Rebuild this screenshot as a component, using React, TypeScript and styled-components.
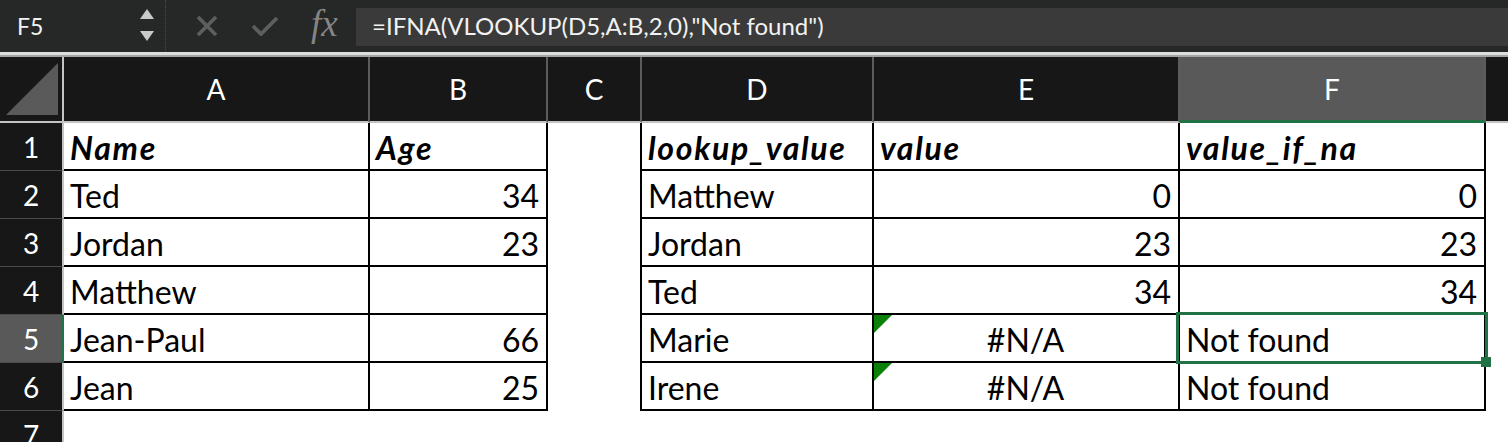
import React from "react";
import styled, { createGlobalStyle } from "styled-components";

const GlobalStyle = createGlobalStyle`
  body {
    margin: 0;
    background: #ffffff;
    font-family: Lato, "Noto Sans", sans-serif;
    overflow: hidden;
  }
`;

type Align = "left" | "right" | "center";

interface CellData {
  text?: string;
  align?: Align;
  bold?: boolean;
  error?: boolean;
}

const COLUMNS = ["A", "B", "C", "D", "E", "F", ""];
const SELECTED_COL = "F";
const SELECTED_ROW = 5;

// which columns carry the black table borders (right edge / bottom edge)
const rightBorder = [true, true, true, true, true, true, false];
const bottomBorder = [true, true, false, true, true, true, false];

const b = (text: string): CellData => ({ text, bold: true });
const l = (text: string): CellData => ({ text });
const r = (text: string): CellData => ({ text, align: "right" });

const rows: CellData[][] = [
  [b("Name"), b("Age"), {}, b("lookup_value"), b("value"), b("value_if_na"), {}],
  [l("Ted"), r("34"), {}, l("Matthew"), r("0"), r("0"), {}],
  [l("Jordan"), r("23"), {}, l("Jordan"), r("23"), r("23"), {}],
  [l("Matthew"), {}, {}, l("Ted"), r("34"), r("34"), {}],
  [
    l("Jean-Paul"),
    r("66"),
    {},
    l("Marie"),
    { text: "#N/A", align: "center", error: true },
    l("Not found"),
    {},
  ],
  [
    l("Jean"),
    r("25"),
    {},
    l("Irene"),
    { text: "#N/A", align: "center", error: true },
    l("Not found"),
    {},
  ],
];

const App: React.FC = () => {
  return (
    <>
      <GlobalStyle />
      <Window>
        <FormulaBar>
          <NameBox>
            <NameText>F5</NameText>
            <Stepper>
              <svg width="16" height="34" viewBox="0 0 16 34">
                <polygon points="8,1 15,11 1,11" fill="#c9c9c9" />
                <polygon points="1,23 15,23 8,33" fill="#c9c9c9" />
              </svg>
            </Stepper>
          </NameBox>
          <BarIcons>
            <svg width="22" height="20" viewBox="0 0 22 20">
              <path
                d="M2 1 L20 19 M20 1 L2 19"
                stroke="#5e5e5e"
                strokeWidth="3.6"
                fill="none"
              />
            </svg>
            <svg width="28" height="20" viewBox="0 0 28 20">
              <path
                d="M2 10 L10 18 L26 2"
                stroke="#5e5e5e"
                strokeWidth="3.8"
                fill="none"
              />
            </svg>
            <FxLabel>fx</FxLabel>
          </BarIcons>
          <FormulaInput>=IFNA(VLOOKUP(D5,A:B,2,0),"Not found")</FormulaInput>
        </FormulaBar>
        <Divider />
        <Sheet>
          <Corner>
            <svg width="54" height="54" viewBox="0 0 54 54">
              <polygon points="52,0 52,52 0,52" fill="#5a5a5a" />
            </svg>
          </Corner>
          {COLUMNS.map((c, i) => (
            <ColHeader key={"h" + i} $selected={c === SELECTED_COL} $last={c === ""}>
              {c}
            </ColHeader>
          ))}
          {rows.map((row, ri) => (
            <React.Fragment key={"r" + ri}>
              <RowHeader $selected={ri + 1 === SELECTED_ROW}>{ri + 1}</RowHeader>
              {row.map((cell, ci) => (
                <Cell
                  key={ci}
                  $align={cell.align || "left"}
                  $bold={!!cell.bold}
                  $right={rightBorder[ci]}
                  $bottom={bottomBorder[ci]}
                >
                  {cell.error && <ErrorFlag />}
                  {cell.text}
                  {ri + 1 === SELECTED_ROW && COLUMNS[ci] === SELECTED_COL && (
                    <Selection>
                      <FillHandle />
                    </Selection>
                  )}
                </Cell>
              ))}
            </React.Fragment>
          ))}
          <RowHeader $selected={false}>7</RowHeader>
          {COLUMNS.map((_, i) => (
            <Cell key={"e" + i} $align="left" $bold={false} $right={false} $bottom={false} />
          ))}
        </Sheet>
      </Window>
    </>
  );
};

const Window = styled.div`
  width: 1508px;
  height: 442px;
  overflow: hidden;
  background: #ffffff;
`;

const FormulaBar = styled.div`
  display: flex;
  align-items: stretch;
  height: 52px;
  background: #262727;
`;

const NameBox = styled.div`
  display: flex;
  align-items: center;
  justify-content: space-between;
  width: 166px;
  padding: 0 10px 0 17px;
  box-sizing: border-box;
  border-right: 1px dotted #4a4a4a;
`;

const NameText = styled.span`
  color: #f2f2f2;
  font-size: 23px;
  margin-top: -1px;
`;

const Stepper = styled.div`
  display: flex;
  align-items: center;
  margin-top: -2px;
`;

const BarIcons = styled.div`
  display: flex;
  align-items: center;
  gap: 33px;
  width: 190px;
  box-sizing: border-box;
  padding: 0 0 0 30px;
  margin-top: -1px;
`;

const FxLabel = styled.span`
  font-family: "Liberation Serif", "DejaVu Serif", serif;
  font-style: italic;
  font-size: 37px;
  color: #858585;
  margin-left: -1px;
  margin-top: -4px;
`;

const FormulaInput = styled.div`
  flex: 1;
  display: flex;
  align-items: center;
  margin: 8px 0 6px 0;
  padding: 0 0 3px 16px;
  background: #3a3a3a;
  color: #f2f2f2;
  font-size: 24px;
  white-space: nowrap;
`;

const Divider = styled.div`
  height: 5px;
  border-top: 3px solid #dedede;
  border-bottom: 2px solid #a4a4a4;
  box-sizing: border-box;
`;

const Sheet = styled.div`
  display: grid;
  grid-template-columns: 64px 306px 178px 94px 232px 306px 306px 1fr;
  grid-template-rows: 66px repeat(6, 48px) 48px;
`;

const Corner = styled.div`
  display: flex;
  align-items: flex-end;
  padding: 0 0 4px 6px;
  background: #171717;
  border-right: 2px solid #c4c4c4;
  border-bottom: 2px solid #c4c4c4;
`;

const ColHeader = styled.div<{ $selected: boolean; $last: boolean }>`
  display: flex;
  align-items: center;
  justify-content: center;
  background: ${(p) => (p.$selected ? "#595959" : "#171717")};
  color: #ffffff;
  font-size: 28px;
  border-right: ${(p) => (p.$last ? "none" : "2px solid #5c5c5c")};
  border-bottom: ${(p) => (p.$selected ? "3px solid #217346" : "2px solid #c4c4c4")};
  padding-bottom: ${(p) => (p.$selected ? "0" : "1px")};
`;

const RowHeader = styled.div<{ $selected: boolean }>`
  display: flex;
  align-items: center;
  justify-content: center;
  background: ${(p) => (p.$selected ? "#595959" : "#171717")};
  color: #ffffff;
  font-size: 28px;
  border-right: 2px solid ${(p) => (p.$selected ? "#217346" : "#c4c4c4")};
  border-bottom: 1px solid #4a4a4a;
`;

const Cell = styled.div<{
  $align: Align;
  $bold: boolean;
  $right: boolean;
  $bottom: boolean;
}>`
  position: relative;
  display: flex;
  align-items: center;
  justify-content: ${(p) =>
    p.$align === "right" ? "flex-end" : p.$align === "center" ? "center" : "flex-start"};
  padding: 2px 7px 0 6px;
  background: #ffffff;
  color: #000000;
  font-size: 32px;
  font-weight: ${(p) => (p.$bold ? 700 : 400)};
  font-style: ${(p) => (p.$bold ? "italic" : "normal")};
  letter-spacing: ${(p) => (p.$bold ? "1.7px" : "0")};
  white-space: nowrap;
  border-right: ${(p) => (p.$right ? "2px solid #000" : "none")};
  border-bottom: ${(p) => (p.$bottom ? "2px solid #000" : "none")};
`;

const ErrorFlag = styled.span`
  position: absolute;
  top: 0;
  left: 0;
  width: 0;
  height: 0;
  border-top: 18px solid #0a800a;
  border-right: 18px solid transparent;
`;

const Selection = styled.div`
  position: absolute;
  z-index: 3;
  left: -4px;
  top: -3px;
  right: -4px;
  bottom: -3px;
  border: 3px solid #217346;
  pointer-events: none;
`;

const FillHandle = styled.div`
  position: absolute;
  right: -6px;
  bottom: -6px;
  width: 10px;
  height: 10px;
  background: #217346;
`;

export default App;
